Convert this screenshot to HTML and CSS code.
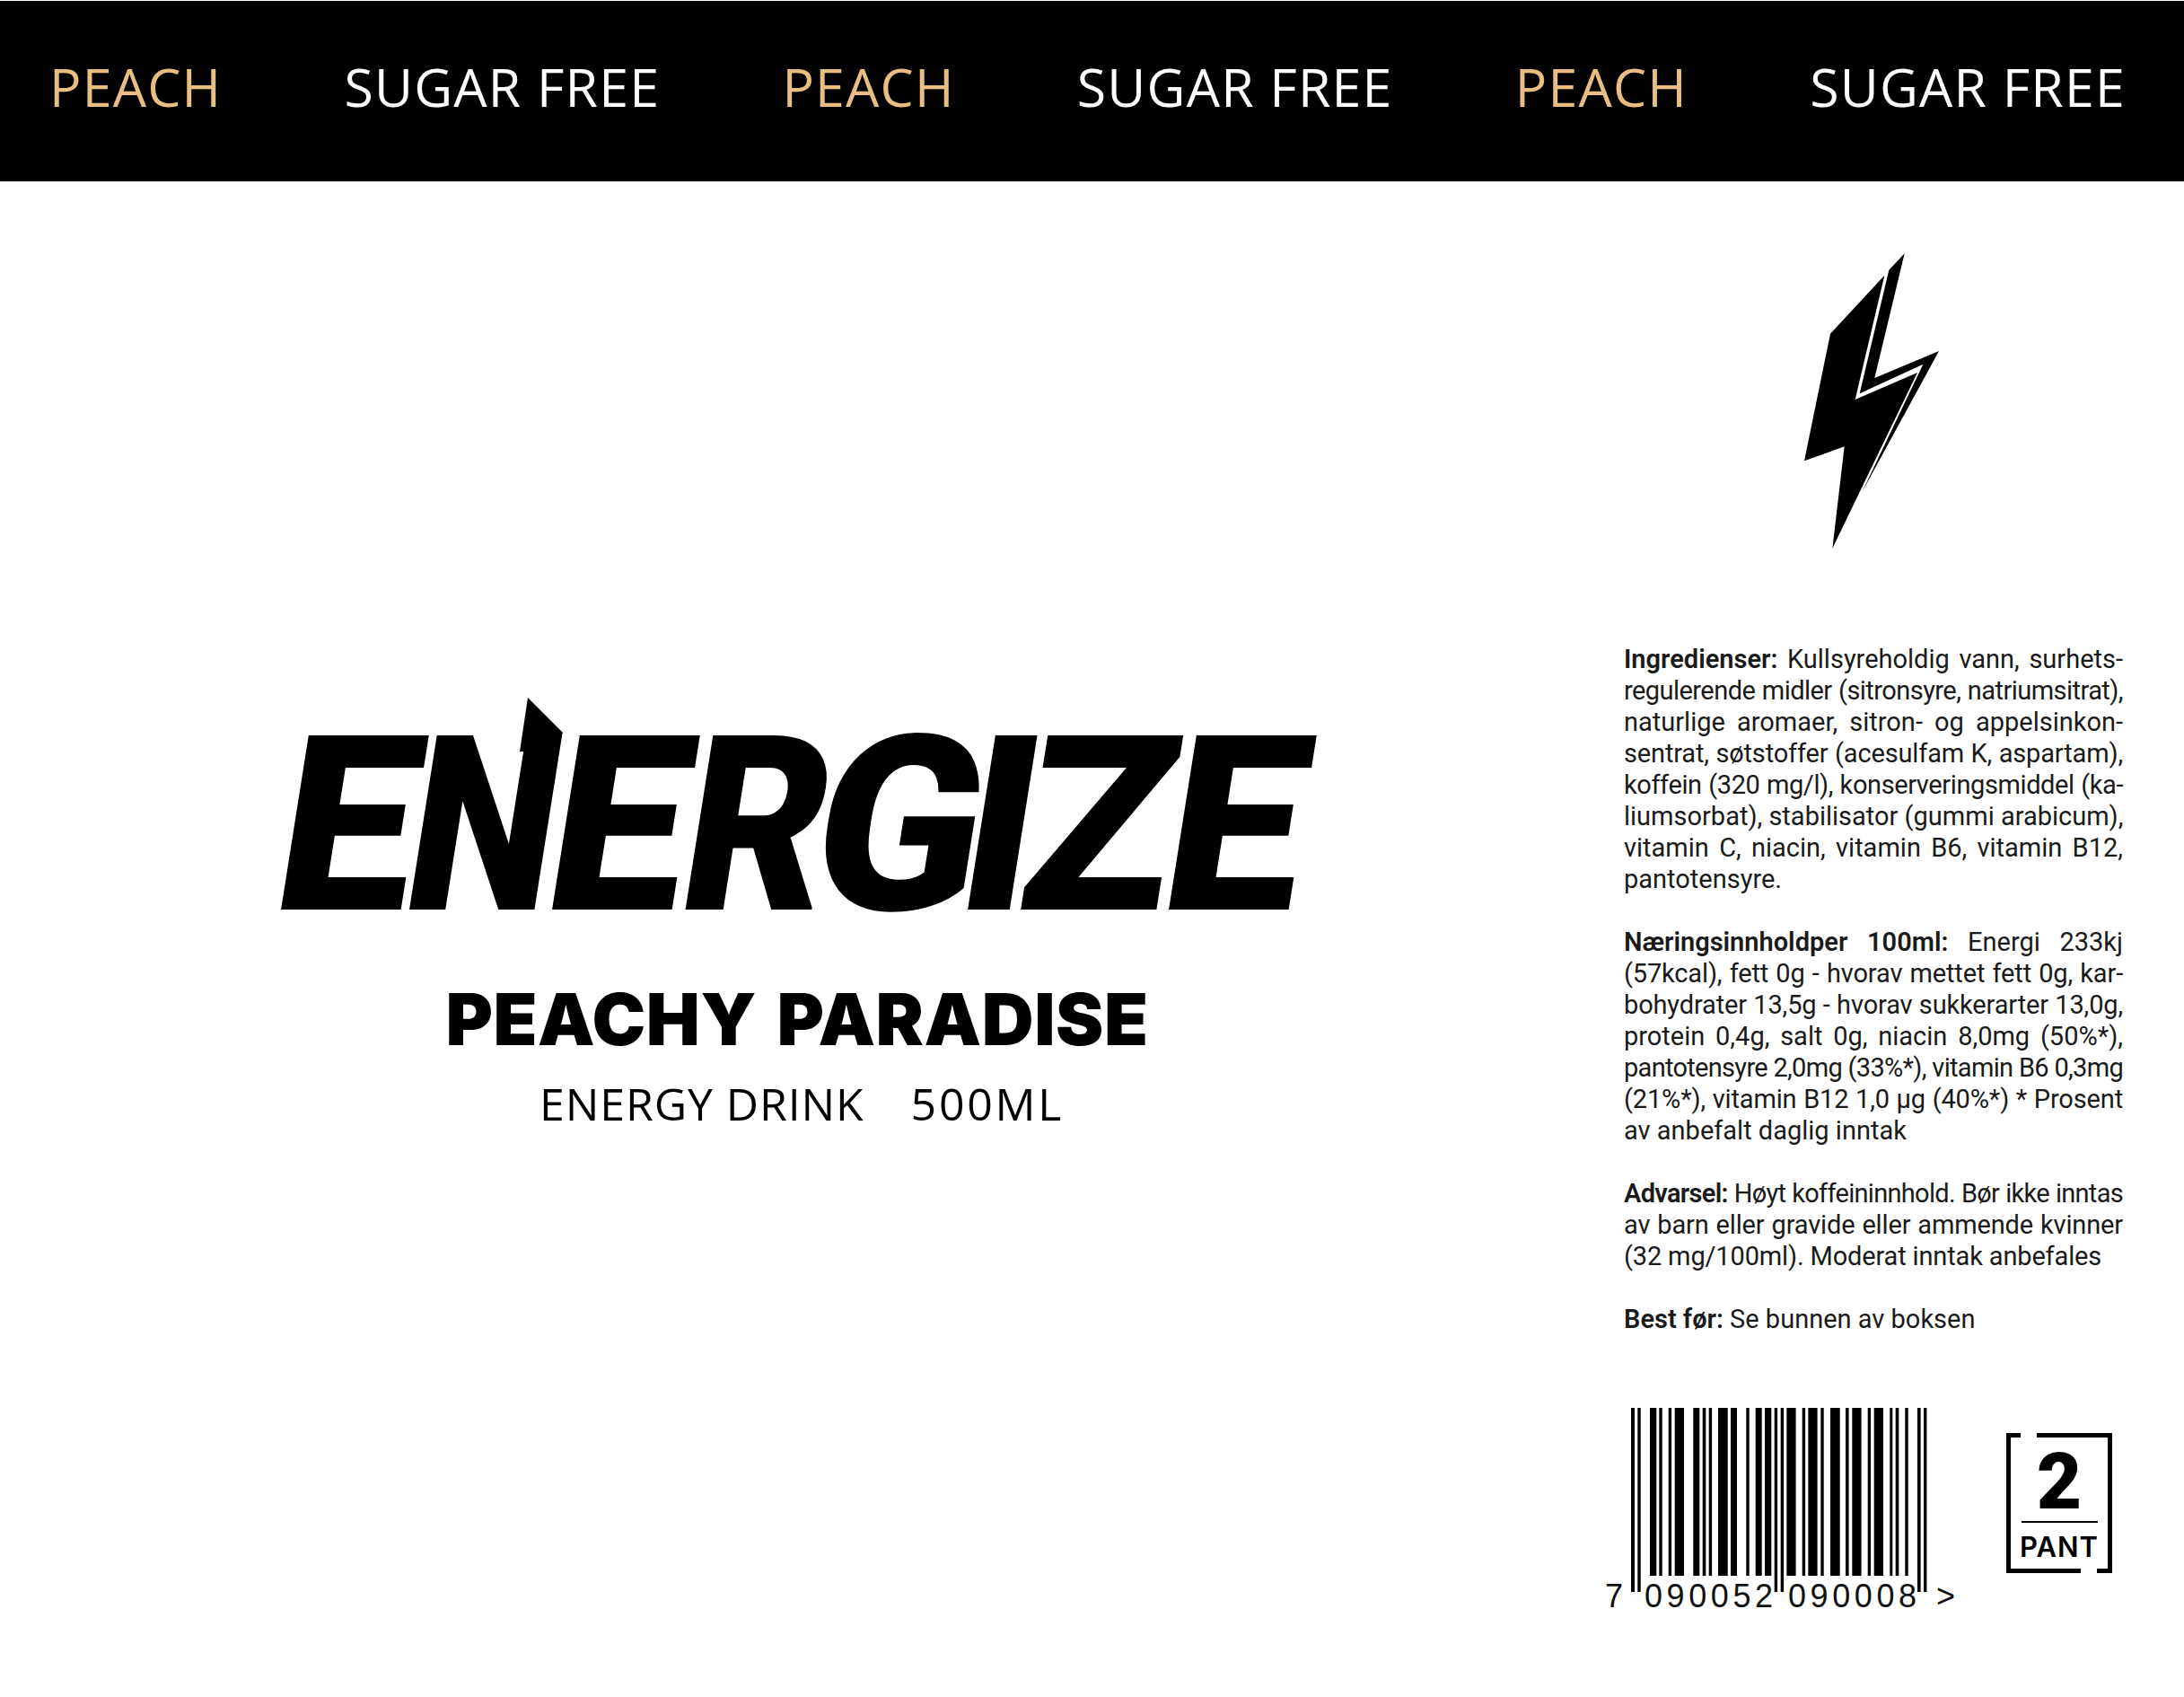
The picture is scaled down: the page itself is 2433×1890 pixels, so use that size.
FILE: index.html
```html
<!DOCTYPE html>
<html lang="no">
<head>
<meta charset="utf-8">
<title>Energize Peach</title>
<link rel="stylesheet" href="styles.css">
</head>
<body>
<header class="banner">
  <span class="tag peach">PEACH</span>
  <span class="tag">SUGAR FREE</span>
  <span class="tag peach">PEACH</span>
  <span class="tag">SUGAR FREE</span>
  <span class="tag peach">PEACH</span>
  <span class="tag">SUGAR FREE</span>
</header>
<main class="label">
  <section class="hero">
    <div class="brand">
      <h1 class="wordmark"><span class="g1">E</span><span class="g2">N</span><span class="g3">E</span><span class="g4">R</span><span class="g5">G</span><span class="g6">I</span><span class="g7">Z</span><span class="g8">E</span></h1>
      <svg class="spike" viewBox="0 0 60 60"><polygon points="9,0 48,39 40,60 0,60"/></svg>
    </div>
    <h2 class="flavour">PEACHY PARADISE</h2>
    <p class="sub"><span>ENERGY DRINK</span><span class="vol">500ML</span></p>
  </section>
  <aside class="info">
    <svg class="bolt" viewBox="0 0 660 1110">
      <polygon points="358,140 177,335 90,760 224,712 184,1052 468,465 260,555"/>
      <polygon points="425,67 373,122 275,535 487,437 285,860 540,393 325,483"/>
    </svg>
    <div class="facts">
      <p class="para">
        <span class="ln"><b>Ingredienser:</b> Kullsyreholdig vann, surhets-</span>
        <span class="ln t3">regulerende midler (sitronsyre, natriumsitrat),</span>
        <span class="ln">naturlige aromaer, sitron- og appelsinkon-</span>
        <span class="ln t1">sentrat, søtstoffer (acesulfam K, aspartam),</span>
        <span class="ln t2">koffein (320 mg/l), konserveringsmiddel (ka-</span>
        <span class="ln">liumsorbat), stabilisator (gummi arabicum),</span>
        <span class="ln">vitamin C, niacin, vitamin B6, vitamin B12,</span>
        <span class="ln end">pantotensyre.</span>
      </p>
      <p class="para">
        <span class="ln"><b>Næringsinnholdper 100ml:</b> Energi 233kj</span>
        <span class="ln t1">(57kcal), fett 0g - hvorav mettet fett 0g, kar-</span>
        <span class="ln t1">bohydrater 13,5g - hvorav sukkerarter 13,0g,</span>
        <span class="ln">protein 0,4g, salt 0g, niacin 8,0mg (50%*),</span>
        <span class="ln t4">pantotensyre 2,0mg (33%*), vitamin B6 0,3mg</span>
        <span class="ln t1">(21%*), vitamin B12 1,0 µg (40%*) * Prosent</span>
        <span class="ln end">av anbefalt daglig inntak</span>
      </p>
      <p class="para">
        <span class="ln t4"><b>Advarsel:</b> Høyt koffeininnhold. Bør ikke inntas</span>
        <span class="ln t1">av barn eller gravide eller ammende kvinner</span>
        <span class="ln end t1">(32 mg/100ml). Moderat inntak anbefales</span>
      </p>
      <p class="para">
        <span class="ln end"><b>Best før:</b> Se bunnen av boksen</span>
      </p>
    </div>
    <div class="codes">
      <div class="barcode">
        <svg class="bars" width="330" height="205" viewBox="0 0 330 205">
          <rect x="0" width="4" height="205"/>
          <rect x="7.3" width="3.4" height="205"/>
          <rect x="21" width="7.3" height="187"/>
          <rect x="31.3" width="3.4" height="187"/>
          <rect x="41.7" width="3.4" height="187"/>
          <rect x="48.7" width="10.3" height="187"/>
          <rect x="69.3" width="7" height="187"/>
          <rect x="79.7" width="3.6" height="187"/>
          <rect x="86.7" width="3.4" height="187"/>
          <rect x="97" width="10.7" height="187"/>
          <rect x="111" width="7" height="187"/>
          <rect x="128.3" width="3.4" height="187"/>
          <rect x="138.7" width="7" height="187"/>
          <rect x="149" width="7.3" height="187"/>
          <rect x="159.7" width="3.4" height="205"/>
          <rect x="166.7" width="3.4" height="205"/>
          <rect x="173.3" width="10.3" height="187"/>
          <rect x="190.7" width="3.4" height="187"/>
          <rect x="197.3" width="10.3" height="187"/>
          <rect x="211.3" width="3.4" height="187"/>
          <rect x="222" width="10.7" height="187"/>
          <rect x="239" width="3.6" height="187"/>
          <rect x="246.3" width="10.3" height="187"/>
          <rect x="263.7" width="3.4" height="187"/>
          <rect x="270.7" width="10.3" height="187"/>
          <rect x="288.3" width="3" height="187"/>
          <rect x="294.7" width="3.6" height="187"/>
          <rect x="305.3" width="3.4" height="187"/>
          <rect x="319" width="3.6" height="205"/>
          <rect x="326" width="3.4" height="205"/>
        </svg>
        <div class="digits"><span class="d1">7</span><span class="d2">090052</span><span class="d3">090008</span><span class="d4">&gt;</span></div>
      </div>
      <div class="pant">
        <span class="gap-top"></span>
        <span class="gap-bottom"></span>
        <strong class="pant-num">2</strong>
        <span class="pant-rule"></span>
        <span class="pant-word">PANT</span>
      </div>
    </div>
  </aside>
</main>
</body>
</html>
```
FILE: styles.css
```css
* { box-sizing: border-box; }
html, body { margin: 0; padding: 0; background: #fff; }
body { width: 2433px; height: 1890px; overflow: hidden; color: #000; font-family: "Open Sans", sans-serif; }

.banner {
  margin-top: 1px;
  height: 201px;
  background: #000;
  display: flex;
  justify-content: space-between;
  align-items: center;
  padding: 0 65px 10px 55px;
}
.tag { color: #fff; font-family: "Open Sans", sans-serif; font-size: 59px; line-height: 1; letter-spacing: 1.2px; white-space: nowrap; }
.peach { color: #e8bf80; }

.label { display: grid; grid-template-columns: 1776px 556px; column-gap: 33px; }

.hero { display: flex; flex-direction: column; align-items: center; padding-top: 598px; }
.brand { position: relative; height: 240px; width: 1200px; }
.wordmark {
  margin: 0;
  display: flex;
  padding-left: 25px;
  font-family: Roboto, sans-serif;
  font-weight: 900;
  font-size: 273px;
  line-height: 240px;
  white-space: nowrap;
  transform: skewX(-9deg);
}
.wordmark span { display: block; flex: none; transform-origin: 0 50%; }
.g1 { width: 145px; }
.g2 { width: 157px; transform: scaleX(.86); }
.g3 { width: 150px; }
.g4 { width: 146px; transform: scaleX(.9); }
.g5 { width: 164px; }
.g6 { width: 68px; }
.g7 { width: 159px; }
.g8 { width: 170px; }
.spike { position: absolute; left: 291px; top: -23px; width: 60px; height: 60px; }
.flavour {
  margin: 55px 0 0;
  font-family: Inter, sans-serif;
  font-weight: 900;
  font-size: 80px;
  line-height: 80px;
  letter-spacing: .6px;
  word-spacing: 6px;
  white-space: nowrap;
}
.sub { margin: 24px 0 0 10px; display: flex; gap: 52px; font-size: 50px; line-height: 60px; letter-spacing: .9px; color: #000; }
.vol { letter-spacing: 2.7px; }

.info { display: flex; flex-direction: column; padding-top: 58px; }
.bolt { width: 220px; height: 370px; margin-left: 171px; fill: #000; }
.facts { margin-top: 87px; font-family: Roboto, sans-serif; font-size: 29px; line-height: 35px; color: #1a1a1a; }
.para { margin: 0 0 35px; }
.ln { display: block; text-align: justify; text-align-last: justify; white-space: nowrap; }
.ln.end { text-align-last: left; }
.ln b { font-weight: 600; }
.t1 { letter-spacing: -.15px; }
.t2 { letter-spacing: -.4px; }
.t3 { letter-spacing: -.55px; }
.t4 { letter-spacing: -.7px; }

.codes { display: flex; align-items: flex-start; margin-top: 46px; padding-left: 8px; }
.barcode { position: relative; width: 330px; height: 240px; }
.bars { display: block; fill: #000; }
.digits { position: absolute; left: -29px; top: 190px; width: 400px; height: 50px; font-family: "Liberation Sans", sans-serif; font-size: 36px; line-height: 40px; letter-spacing: 4.6px; color: #111; }
.digits span { position: absolute; top: 0; }
.d1 { left: 0; }
.d2 { left: 44px; }
.d3 { left: 204px; }
.d4 { left: 369px; }

.pant {
  position: relative;
  width: 118px; height: 156px;
  margin: 28px 0 0 88px;
  border: 5px solid #000;
  display: flex; flex-direction: column; align-items: center;
}
.gap-top, .gap-bottom { position: absolute; width: 18px; height: 5px; background: #fff; }
.gap-top { left: 11px; top: -5px; }
.gap-bottom { left: 78px; bottom: -5px; }
.pant-num { font-family: Roboto, sans-serif; font-weight: 900; font-size: 87px; line-height: 76px; margin-top: 11px; }
.pant-rule { width: 85px; height: 2px; background: #000; margin-top: 6px; }
.pant-word { font-family: Inter, sans-serif; font-weight: 600; font-size: 31px; line-height: 32px; margin-top: 11px; letter-spacing: 1px; }
```
